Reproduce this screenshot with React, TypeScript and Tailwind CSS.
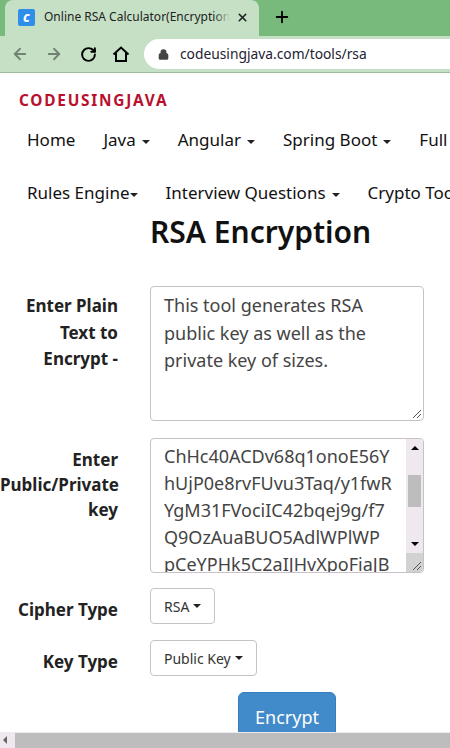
import React from 'react';
import { ArrowLeft, ArrowRight, RotateCw, Lock, X, Plus } from 'lucide-react';

const FONT = "font-['Noto_Sans',sans-serif]";

const Caret = ({ className = '' }: { className?: string }) => (
  <span className={`inline-block w-0 h-0 border-x-[4px] border-x-transparent border-t-[4px] border-t-[#222] align-middle ${className}`} />
);

const NavItem = ({ label, caret = true, tight = false }: { label: string; caret?: boolean; tight?: boolean }) => (
  <span className="shrink-0 whitespace-nowrap">
    {label}
    {caret && <Caret className={tight ? 'ml-0' : 'ml-[6px]'} />}
  </span>
);

const Label = ({ children, className = '' }: { children: React.ReactNode; className?: string }) => (
  <div className={`w-[118px] shrink-0 text-right font-bold text-[17px] text-[#222] ${className}`}>{children}</div>
);

const Dropdown = ({ label, width }: { label: string; width: string }) => (
  <div className={`${width} h-[36px] flex items-center pl-[13px] gap-[4px] bg-white border border-[#c8c2c8] rounded-[4px] text-[14px] text-[#333]`}>
    {label}
    <Caret />
  </div>
);

const Grip = () => (
  <svg className="absolute right-[1px] bottom-[1px]" width="10" height="10" viewBox="0 0 10 10">
    <path d="M1 9 9 1M5 9 9 5" stroke="#555" strokeWidth="1" />
  </svg>
);

const App: React.FC = () => {
  return (
    <div className={`w-[450px] h-[748px] overflow-hidden flex flex-col bg-white ${FONT}`}>
      {/* browser tab strip */}
      <div className="h-[36px] shrink-0 bg-[#78b97c] flex pl-[5px]">
        <div className="w-[254px] h-[36px] bg-[#c5e0c5] rounded-t-[8px] flex items-center pl-[13px] pr-[10px] pb-[2px]">
          <div className="w-[17px] h-[17px] bg-[#2f8fe8] rounded-[2px] flex items-center justify-center text-white font-bold italic text-[14px] leading-none">c</div>
          <div className="ml-[9px] w-[186px] relative overflow-hidden whitespace-nowrap text-[12px] text-[#222]">
            Online RSA Calculator(Encryption
            <span className="absolute right-0 top-0 bottom-0 w-[16px] bg-gradient-to-r from-transparent to-[#c5e0c5]" />
          </div>
          <X size={13} strokeWidth={3} className="ml-auto text-[#222]" />
        </div>
        <Plus size={18} strokeWidth={2.5} className="ml-[14px] mt-[8px] text-black" />
      </div>

      {/* browser toolbar */}
      <div className="h-[37px] shrink-0 bg-[#c5e0c5] border-b border-[#9dbb9d] flex items-center pl-[11px]">
        <ArrowLeft size={18} strokeWidth={2.4} className="text-[#728272]" />
        <ArrowRight size={18} strokeWidth={2.4} className="ml-[16px] text-[#728272]" />
        <RotateCw size={17} strokeWidth={2.8} className="ml-[17px] text-black" />
        <svg className="ml-[15px] text-black" width="18" height="18" viewBox="0 0 18 18" fill="none" stroke="currentColor" strokeWidth="2">
          <path d="M1.5 9.5 9 2.5l7.5 7M4 8v8h10V8" />
        </svg>
        <div className="ml-[14px] flex-1 h-[30px] bg-white rounded-l-full flex items-center pl-[14px]">
          <Lock size={11} strokeWidth={3} fill="currentColor" className="text-[#444]" />
          <span className="ml-[11px] mt-[1px] text-[13.8px] text-[#223]">codeusingjava.com/tools/rsa</span>
        </div>
      </div>

      {/* page */}
      <div className="flex-1 min-h-0 overflow-hidden text-[#111]">
        <div className="pl-[19px] pt-[18px] text-[15.4px] leading-[20px] font-bold tracking-[1.75px] text-[#b8102e]">CODEUSINGJAVA</div>

        <div className="flex items-center pl-[27px] mt-[16px] gap-[28px] h-[26px] text-[17px]">
          <NavItem label="Home" caret={false} />
          <NavItem label="Java" />
          <NavItem label="Angular" />
          <NavItem label="Spring Boot" />
          <NavItem label="Full" caret={false} />
        </div>
        <div className="flex items-center pl-[27px] mt-[27px] gap-[28px] h-[26px] text-[17px]">
          <NavItem label="Rules Engine" tight />
          <NavItem label="Interview Questions" />
          <NavItem label="Crypto Tools" caret={false} />
        </div>

        <h1 className="mt-[6px] pl-[150px] text-[30px] leading-[40px] font-semibold text-[#111] whitespace-nowrap">RSA Encryption</h1>

        <div className="flex mt-[34px] gap-[32px]">
          <Label className="pt-[7px] leading-[26.5px]">Enter Plain Text to Encrypt -</Label>
          <div className="w-[274px] h-[135px] border border-[#c8c2c8] rounded-[4px] pl-[13px] pr-[20px] pt-[5px] text-[18px] leading-[27.5px] text-[#444] relative">
            This tool generates RSA public key as well as the private key of sizes.
            <Grip />
          </div>
        </div>

        <div className="flex mt-[17px] gap-[32px]">
          <Label className="pt-[9px] leading-[25px]">Enter Public/Private key</Label>
          <div className="w-[274px] h-[135px] border border-[#c8c2c8] rounded-[4px] pl-[13px] pt-[4px] text-[18px] leading-[27px] text-[#444] relative overflow-hidden">
            <div className="w-[243px] whitespace-nowrap overflow-hidden">
              <div>ChHc40ACDv68q1onoE56Y</div>
              <div>hUjP0e8rvFUvu3Taq/y1fwR</div>
              <div>YgM31FVociIC42bqej9g/f7</div>
              <div>Q9OzAuaBUO5AdlWPlWP</div>
              <div>pCeYPHk5C2aIJHvXpoFiaJB</div>
            </div>
            <div className="absolute right-0 top-0 bottom-0 w-[17px] bg-[#efe9ef] flex flex-col items-center">
              <span className="mt-[7px] w-0 h-0 border-x-[4px] border-x-transparent border-b-[4px] border-b-black" />
              <span className="mt-[25px] w-[13px] h-[32px] bg-[#bdbdbd]" />
              <span className="mt-[35px] w-0 h-0 border-x-[4px] border-x-transparent border-t-[4px] border-t-black" />
              <span className="mt-auto w-[17px] h-[19px] bg-[#d2d2d2] relative">
                <Grip />
              </span>
            </div>
          </div>
        </div>

        <div className="flex mt-[15px] gap-[32px]">
          <Label className="pt-[9px] leading-[26.5px]">Cipher Type</Label>
          <Dropdown label="RSA" width="w-[65px]" />
        </div>
        <div className="flex mt-[16px] gap-[32px]">
          <Label className="pt-[9px] leading-[26.5px]">Key Type</Label>
          <Dropdown label="Public Key" width="w-[107px]" />
        </div>

        <div className="mt-[16px] ml-[238px] w-[98px] h-[50px] bg-[#428bca] border border-[#357ebd] rounded-[6px] flex items-center justify-center text-white text-[18px]">Encrypt</div>
      </div>

      {/* horizontal page scrollbar */}
      <div className="h-[16px] shrink-0 bg-[#efe9ef] flex items-center">
        <span className="ml-[3px] w-0 h-0 border-y-[4px] border-y-transparent border-r-[4px] border-r-[#666]" />
        <div className="ml-[8px] flex-1 h-[15px] bg-[#bdbdbd]" />
      </div>
    </div>
  );
};

export default App;
